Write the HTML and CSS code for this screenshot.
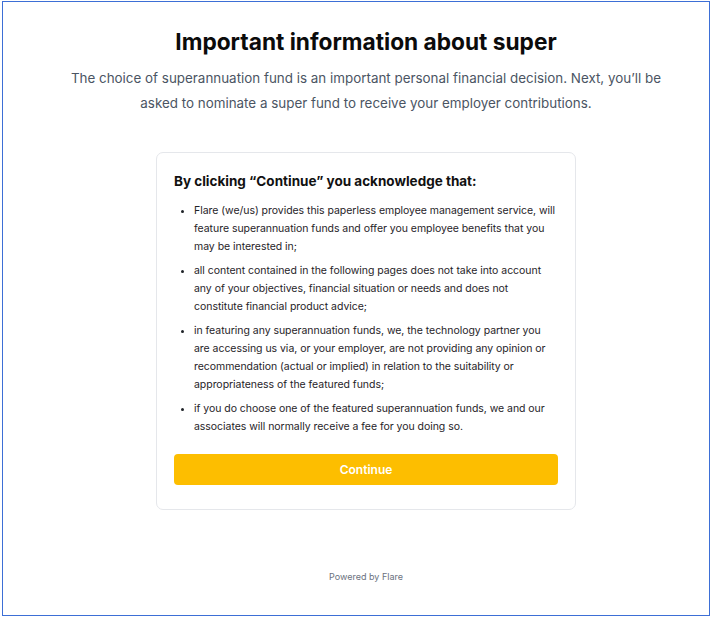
FILE: index.html
```html
<!DOCTYPE html>
<html lang="en">
<head>
  <meta charset="UTF-8" />
  <meta name="viewport" content="width=device-width, initial-scale=1.0"/>
  <title>Flare – Important information about super</title>
  <link rel="stylesheet" href="styles.css">
</head>

<body>
  <div class="frame">
    <main>
      <h1>Important information about super</h1>
      <p class="intro">The choice of superannuation fund is an important personal financial decision. Next, you’ll be asked to nominate a super fund to receive your employer contributions.</p>

      <div class="card">
        <h2>By clicking “Continue” you acknowledge that:</h2>
        <ul>
          <li>Flare (we/us) provides this paperless employee management service, will feature superannuation funds and offer you employee benefits that you may be interested in;</li>
          <li>all content contained in the following pages does not take into account any of your objectives, financial situation or needs and does not constitute financial product advice;</li>
          <li>in featuring any superannuation funds, we, the technology partner you are accessing us via, or your employer, are not providing any opinion or recommendation (actual or implied) in relation to the suitability or appropriateness of the featured funds;</li>
          <li>if you do choose one of the featured superannuation funds, we and our associates will normally receive a fee for you doing so.</li>
        </ul>
        <button>Continue</button>
      </div>
    </main>

    <footer>Powered by Flare</footer>
  </div>
</body>
</html>
```

FILE: styles.css
```css
* {
  margin: 0;
  padding: 0;
  box-sizing: border-box;
  font-family: 'Inter', 'Noto Sans', sans-serif;
}

body {
  background: white;
  color: #111;
}

.frame {
  margin: 1px 1px 1px 2px;
  padding-left: 20px;
  height: 615px;
  border: 1px solid #3d6fd6;
  display: flex;
  flex-direction: column;
  align-items: center;
}

main {
  display: flex;
  flex-direction: column;
  align-items: center;
  padding-top: 26px;
}

h1 {
  font-size: 22.7px;
  line-height: 28px;
  font-weight: 700;
  color: #0b0b0b;
}

.intro {
  margin-top: 10px;
  max-width: 620px;
  font-size: 13.4px;
  line-height: 25px;
  color: #4b5563;
  text-align: center;
}

.card {
  margin-top: 36px;
  width: 420px;
  padding: 18px 17px 24px;
  border: 1px solid #e5e7eb;
  border-radius: 7px;
  background: white;
}

.card h2 {
  font-size: 13.5px;
  line-height: 20px;
  font-weight: 700;
  color: #111;
}

.card ul {
  margin-top: 11px;
  padding-left: 20px;
  font-size: 10.5px;
  letter-spacing: -0.04px;
  line-height: 18px;
  color: #1f2328;
}

.card li + li {
  margin-top: 6px;
}

.card button {
  margin-top: 18px;
  width: 100%;
  height: 31px;
  border: none;
  border-radius: 4px;
  background: #fdbe00;
  color: white;
  font-size: 12px;
  font-weight: 600;
  cursor: pointer;
}

footer {
  margin-top: 61px;
  font-size: 9px;
  color: #6b7280;
}
```
